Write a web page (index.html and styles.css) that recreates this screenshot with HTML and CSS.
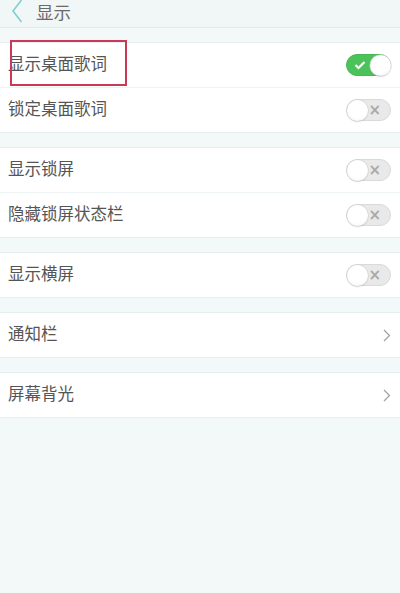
FILE: index.html
```html
<!DOCTYPE html>
<html lang="zh-CN">
<head>
<meta charset="utf-8">
<link rel="stylesheet" href="styles.css">
</head>
<body>
<div class="header">
  <svg class="back" width="12" height="26" viewBox="0 0 12 26"><path d="M10.5 1 L2 12 L10.5 23" fill="none" stroke="#7fcfcf" stroke-width="1.6"/></svg>
  <span class="title">显示</span>
</div>
<div class="group first">
  <div class="row"><span class="label">显示桌面歌词</span><span class="toggle on"><svg class="check" width="12" height="10" viewBox="0 0 12 10"><path d="M1.5 5 L4.5 8 L10.5 2" fill="none" stroke="#fff" stroke-width="2.2"/></svg><span class="knob"></span></span><span class="mark"></span></div>
  <div class="row"><span class="label">锁定桌面歌词</span><span class="toggle off"><span class="knob"></span><span class="x">×</span></span></div>
</div>
<div class="group">
  <div class="row"><span class="label">显示锁屏</span><span class="toggle off"><span class="knob"></span><span class="x">×</span></span></div>
  <div class="row"><span class="label">隐藏锁屏状态栏</span><span class="toggle off"><span class="knob"></span><span class="x">×</span></span></div>
</div>
<div class="group">
  <div class="row"><span class="label">显示横屏</span><span class="toggle off"><span class="knob"></span><span class="x">×</span></span></div>
</div>
<div class="group">
  <div class="row"><span class="label">通知栏</span><svg class="chev" width="8" height="13" viewBox="0 0 8 13"><path d="M1 1 L6.5 6.5 L1 12" fill="none" stroke="#a0a0a0" stroke-width="1.2"/></svg></div>
</div>
<div class="group">
  <div class="row"><span class="label">屏幕背光</span><svg class="chev" width="8" height="13" viewBox="0 0 8 13"><path d="M1 1 L6.5 6.5 L1 12" fill="none" stroke="#a0a0a0" stroke-width="1.2"/></svg></div>
</div>
</body>
</html>
```
FILE: styles.css
```css
html, body {
  margin: 0;
  padding: 0;
}
body {
  width: 400px;
  height: 593px;
  overflow: hidden;
  background: #f3f9f9;
  font-family: "Noto Sans CJK SC", "Noto Sans", sans-serif;
  color: #555;
}
.header {
  height: 27px;
  background: #f1f6f6;
  border-bottom: 1px solid #e2eaea;
  display: flex;
  align-items: flex-start;
  overflow: hidden;
}
.back {
  margin-left: 11px;
  margin-top: -1px;
}
.title {
  margin-left: 13px;
  margin-top: 1px;
  font-size: 17.5px;
  line-height: 22px;
  color: #6a6a6a;
}
.group {
  margin-top: 14px;
  background: #fff;
  border-top: 1px solid #e6eeee;
  border-bottom: 1px solid #e6eeee;
}
.row {
  height: 44px;
  display: flex;
  align-items: center;
  justify-content: space-between;
  padding: 0 9px 0 8px;
  position: relative;
}
.row + .row {
  border-top: 1px solid #eef3f3;
}
.label {
  font-size: 16.5px;
  line-height: 20px;
  margin-top: -5px;
  color: #555;
}
.toggle {
  width: 45px;
  height: 22px;
  border-radius: 12px;
  box-sizing: border-box;
  display: flex;
  align-items: center;
  justify-content: space-between;
}
.toggle.on {
  background: #4cc25a;
  border: 1px solid #45b853;
  padding: 0 0 0 7px;
}
.toggle.off {
  background: #e9e9e9;
  border: 1px solid #dadada;
  padding: 0 9px 0 0;
}
.knob {
  width: 21px;
  height: 21px;
  border-radius: 50%;
  background: radial-gradient(circle at 50% 40%, #ffffff 55%, #f0f0f0 100%);
  box-shadow: 0 0 0 0.5px #cfcfcf, 0 1px 1.5px rgba(0,0,0,0.15);
  margin: -0.5px;
}
.x {
  font-family: "DejaVu Sans", sans-serif;
  font-size: 15px;
  font-weight: bold;
  color: #a9a9a9;
  line-height: 15px;
}
.mark {
  position: absolute;
  left: 10px;
  top: -3px;
  width: 117px;
  height: 46px;
  border: 2px solid #c83a58;
  box-sizing: border-box;
}
```
